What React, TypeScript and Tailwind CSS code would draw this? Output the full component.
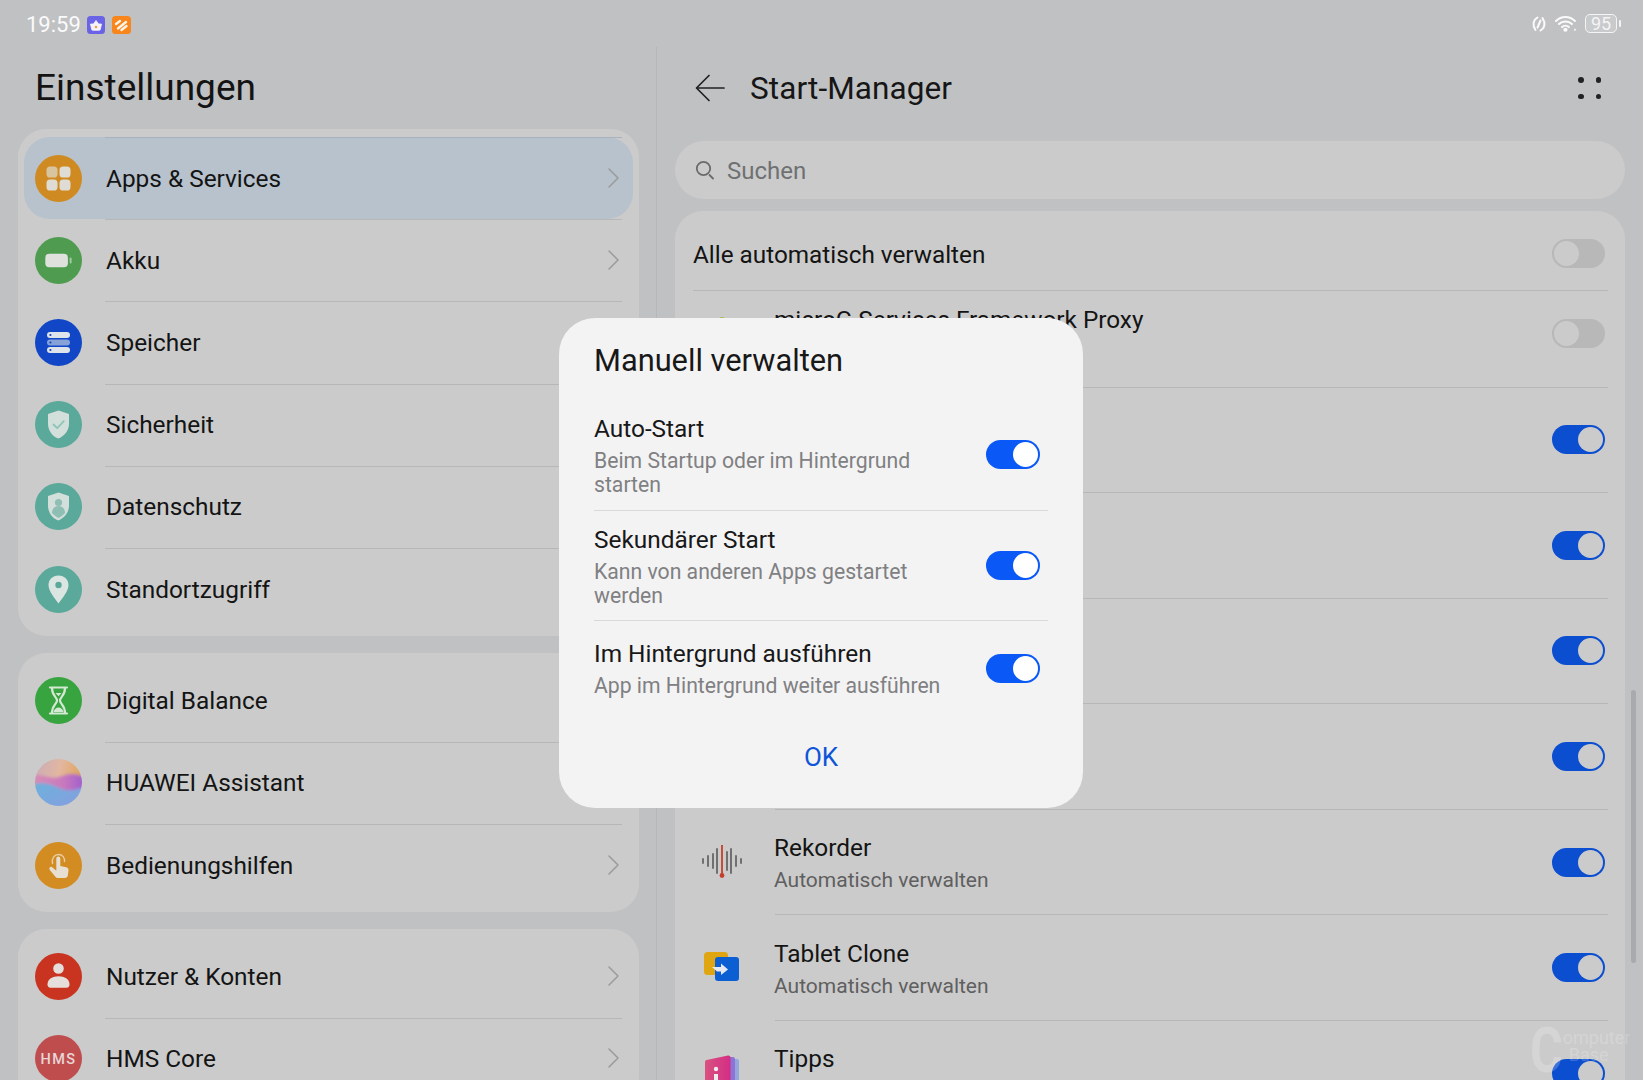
import type { ReactNode } from 'react'

function Circle({ fill, children }: { fill: string; children?: ReactNode }) {
  return (
    <svg viewBox="0 0 47 47" className="h-[47px] w-[47px] shrink-0">
      <circle cx="23.5" cy="23.5" r="23.5" fill={fill} />
      {children}
    </svg>
  )
}

const AppsIcon = () => (
  <Circle fill="#d08a22">
    <rect x="11.5" y="11.5" width="11" height="11" rx="3.6" fill="#d9c4a0" />
    <rect x="24.5" y="11.5" width="11" height="11" rx="3.6" fill="#dfdcd6" />
    <rect x="11.5" y="24.5" width="11" height="11" rx="3.6" fill="#dfdcd6" />
    <rect x="24.5" y="24.5" width="11" height="11" rx="3.6" fill="#dfdcd6" />
  </Circle>
)
const BatteryIcon = () => (
  <Circle fill="#4f9c50">
    <rect x="10.3" y="16.7" width="22.6" height="13.6" rx="4" fill="#dfe2dc" />
    <rect x="34.6" y="20.6" width="2" height="6" rx="1" fill="#a5c8a2" />
  </Circle>
)
const StorageIcon = () => (
  <Circle fill="#1147c6">
    <rect x="12" y="13" width="23" height="6" rx="3" fill="#dfe3ea" />
    <rect x="12" y="20.5" width="23" height="6" rx="3" fill="#86a2d9" />
    <rect x="12" y="28" width="23" height="6" rx="3" fill="#dfe3ea" />
    <circle cx="15.4" cy="16" r="1.1" fill="#1147c6" />
    <circle cx="15.4" cy="23.5" r="1.1" fill="#1147c6" />
    <circle cx="15.4" cy="31" r="1.1" fill="#1147c6" />
  </Circle>
)
const Shield = () => <path d="M23.5 9.5l10.5 3.6v9.6c0 6.8-4.6 12.1-10.5 14.8C17.6 35.8 13 29.5 13 22.7V13.1z" fill="#d3dfdb" />
const SecurityIcon = () => (
  <Circle fill="#5aa99a">
    <Shield />
    <path d="M18.5 23.5l3.7 3.7 6.6-7" fill="none" stroke="#8fc5b9" strokeWidth="1.8" strokeLinecap="round" strokeLinejoin="round" />
  </Circle>
)
const PrivacyIcon = () => (
  <Circle fill="#5aa99a">
    <Shield />
    <circle cx="23.5" cy="19.5" r="3.6" fill="#8fbfb4" />
    <path d="M17 30c0-4.5 2.9-7 6.5-7s6.5 2.5 6.5 7c-1.8 2.1-4 3.8-6.5 5-2.5-1.2-4.7-2.9-6.5-5z" fill="#8fbfb4" />
  </Circle>
)
const LocationIcon = () => (
  <Circle fill="#5aa99a">
    <path d="M23.5 9.5c6 0 10 4.3 10 9.6 0 6-5.8 12.8-10 18.4-4.2-5.6-10-12.4-10-18.4 0-5.3 4-9.6 10-9.6z" fill="#dbe6e3" />
    <circle cx="23.5" cy="19" r="3.2" fill="#5aa99a" />
  </Circle>
)
const BalanceIcon = () => (
  <Circle fill="#37a43f">
    <path d="M15 10.5h17M15 36.5h17M17 11c0 8 5 9 5 12.5S17 28 17 36M30 11c0 8-5 9-5 12.5S30 28 30 36" fill="none" stroke="#d5e8d4" strokeWidth="2.2" strokeLinecap="round" />
    <path d="M20.5 16h6l-3 3.2z" fill="#d5e8d4" />
    <path d="M18.5 35c.6-3 3-4.500 5-4.500s4.400 1.500 5 4.500z" fill="#d5e8d4" />
  </Circle>
)
const AssistantIcon = () => (
  <svg viewBox="0 0 47 47" className="h-[47px] w-[47px] shrink-0">
    <defs>
      <clipPath id="orb">
        <circle cx="23.5" cy="23.5" r="23.5" />
      </clipPath>
      <filter id="soft">
        <feGaussianBlur stdDeviation="1.6" />
      </filter>
      <linearGradient id="orbTop" x1="0" y1="0" x2="1" y2="0.3">
        <stop offset="0" stopColor="#c4a9bd" />
        <stop offset="0.55" stopColor="#e2b7a0" />
        <stop offset="1" stopColor="#dfa04f" />
      </linearGradient>
      <linearGradient id="orbMid" x1="0" y1="0" x2="1" y2="0">
        <stop offset="0" stopColor="#d890b4" />
        <stop offset="0.6" stopColor="#c878bd" />
        <stop offset="1" stopColor="#9a5ccf" />
      </linearGradient>
      <linearGradient id="orbBottom" x1="0" y1="0" x2="1" y2="1">
        <stop offset="0" stopColor="#6bb2dc" />
        <stop offset="1" stopColor="#8a9be0" />
      </linearGradient>
    </defs>
    <g clipPath="url(#orb)">
      <g filter="url(#soft)">
        <rect x="-4" y="-4" width="55" height="55" fill="url(#orbTop)" />
        <path d="M-4 17c8-4 19 4 28 1s15-5 27 1v32H-4z" fill="url(#orbMid)" />
        <path d="M-4 26c8-3 18-2 26 2s16 5 29-1v24H-4z" fill="url(#orbBottom)" />
      </g>
    </g>
  </svg>
)
const AccessIcon = () => (
  <Circle fill="#d38c22">
    <path d="M17.5 21.5c-1-5.5 2-9 6-9s6.500 3.200 6 7" fill="none" stroke="#e9cda0" strokeWidth="1.4" strokeLinecap="round" />
    <path d="M21.3 16.5c0-2.800 4-2.800 4 0v7.500l6 1.300c1.700.4 2.400 1.600 2.200 3.200l-.7 5c-.2 1.500-1.400 2.500-3 2.500h-6.600c-1.200 0-2.100-.4-2.800-1.300l-5.600-6.700c-1.500-1.900.9-4.200 2.700-2.600l3.800 3.300z" fill="#e6dfd2" />
  </Circle>
)
const UserIcon = () => (
  <Circle fill="#c8341f">
    <circle cx="23.5" cy="15.5" r="5.3" fill="#e5dedb" />
    <path d="M12.5 31.5c0-5.500 5-8.200 11-8.200s11 2.700 11 8.200c0 2-1 3.200-3 3.200h-16c-2 0-3-1.200-3-3.200z" fill="#e5dedb" />
  </Circle>
)
const HmsIcon = () => (
  <Circle fill="#bf4d4e">
    <text x="23.5" y="28.5" textAnchor="middle" fontFamily="Roboto, sans-serif" fontSize="14.5" fontWeight="500" letterSpacing="1.5" fill="#e8d6d6">
      HMS
    </text>
  </Circle>
)

const Chevron = () => (
  <svg viewBox="0 0 11 20" className="-mt-[2px] h-[20px] w-[11px] shrink-0">
    <path d="M1 1l9 9-9 9" fill="none" stroke="#9b9b9b" strokeWidth="1.5" strokeLinecap="round" strokeLinejoin="round" />
  </svg>
)

function SettingRow({ icon, label, first, selected }: { icon: ReactNode; label: string; first?: boolean; selected?: boolean }) {
  return (
    <div className={selected ? 'mx-[6px] flex h-[82.2px] items-center gap-[24px] rounded-[26px] bg-[#b7c2cd] pl-[11px] pr-[11px]' : 'mx-[6px] flex h-[82.2px] items-center gap-[24px] pl-[11px] pr-[11px]'}>
      {icon}
      <div className={first && !selected ? '-ml-[1px] flex h-full flex-1 items-center justify-between pl-[1px] pr-[3px]' : selected ? '-ml-[1px] flex h-full flex-1 items-center justify-between border-t border-[#a9b3bd] pl-[1px] pr-[3px]' : '-ml-[1px] flex h-full flex-1 items-center justify-between border-t border-[#b7b7b7] pl-[1px] pr-[3px]'}>
        <span className="text-[24.4px] leading-[32px] text-[#141414]">{label}</span>
        <Chevron />
      </div>
    </div>
  )
}

function Toggle({ on, bright, className }: { on: boolean; bright?: boolean; className?: string }) {
  if (!on) {
    return (
      <div className={`flex h-[29px] w-[53px] shrink-0 items-center justify-start rounded-full bg-[#b8b8b8] pl-[2px] ${className ?? ''}`}>
        <div className="h-[25px] w-[25px] rounded-full bg-[#cbcbcb]" />
      </div>
    )
  }
  return (
    <div className={bright ? 'flex h-[29px] w-[54px] shrink-0 items-center justify-end rounded-full bg-[#0a59f7] pr-[2px]' : 'flex h-[29px] w-[53px] shrink-0 items-center justify-end rounded-full bg-[#0b4ed0] pr-[2px]'}>
      <div className={bright ? 'h-[25px] w-[25px] rounded-full bg-white' : 'h-[25px] w-[25px] rounded-full bg-[#cbcbcb]'} />
    </div>
  )
}

const RecorderIcon = () => (
  <svg viewBox="0 0 40 34" className="h-[34px] w-[40px]">
    {[
      [1, 2],
      [6, 5],
      [11, 7],
      [15, 12],
      [25, 9],
      [29, 12],
      [34, 5],
      [39, 2],
    ].map(([x, h]) => (
      <line key={x} x1={x} x2={x} y1={16 - h} y2={16 + h} stroke="#666" strokeWidth="1.8" strokeLinecap="round" />
    ))}
    <line x1="20" x2="20" y1="0" y2="30" stroke="#c5402a" strokeWidth="1.8" />
    <circle cx="20" cy="30.5" r="2.4" fill="#c5402a" />
  </svg>
)
const CloneIcon = () => (
  <svg viewBox="0 0 36 30" className="h-[30px] w-[36px]">
    <rect x="0" y="0" width="24" height="23" rx="3.5" fill="#dfa611" />
    <rect x="11" y="5" width="24" height="24" rx="3" fill="#0b5fd3" />
    <path d="M8 15h9v-3.500l7 6-7 5.500v-3.500h-4z" fill="#e6eaf0" />
  </svg>
)
const TipsIcon = () => (
  <svg viewBox="0 0 36 36" className="h-[36px] w-[36px]">
    <defs>
      <linearGradient id="tips" x1="0" y1="0" x2="1" y2="0">
        <stop offset="0" stopColor="#d9527f" />
        <stop offset="1" stopColor="#d42d86" />
      </linearGradient>
    </defs>
    <rect x="27" y="4" width="8" height="32" rx="2" fill="#93a7dc" />
    <rect x="22" y="2" width="9" height="34" rx="2" fill="#8e72d6" />
    <path d="M1 7c0-1 .6-1.800 1.600-2L24 .5c1.300-.3 2.500.7 2.500 2V36H1z" fill="url(#tips)" />
    <circle cx="12" cy="14" r="2.2" fill="#eee" />
    <rect x="10" y="19" width="4" height="17" fill="#eee" />
  </svg>
)

function AppRow({ name, icon }: { name?: string; icon?: ReactNode }) {
  return (
    <div className="flex h-[105.6px] items-stretch">
      <div className="flex w-[82px] shrink-0 items-center justify-center pr-[24px]">{icon}</div>
      <div className="flex flex-1 items-center justify-between border-t border-[#b7b7b7] pr-[3px]">
        <div className={name ? '-ml-[1px] flex flex-col pt-[4px]' : 'hidden'}>
          <span className="text-[24.4px] leading-[32px] text-[#141414]">{name}</span>
          <span className="text-[21px] leading-[32px] text-[#5f5f5f]">Automatisch verwalten</span>
        </div>
        <span />
        <Toggle on />
      </div>
    </div>
  )
}

function DialogOption({ title, lines, divider, className }: { title: string; lines: string[]; divider?: boolean; className: string }) {
  return (
    <div className={divider ? `flex items-center justify-between border-b border-[#d9d9da] pr-[8px] ${className}` : `flex items-center justify-between pr-[8px] ${className}`}>
      <div className="flex flex-col">
        <span className="pb-[5px] text-[24.4px] leading-[31px] text-[#181818]">{title}</span>
        {lines.map((line) => (
          <span key={line} className="text-[21.2px] leading-[24px] text-[#808082]">
            {line}
          </span>
        ))}
      </div>
      <Toggle on bright />
    </div>
  )
}

export default function App() {
  return (
    <div className="relative flex h-[1080px] w-[1643px] flex-col overflow-hidden bg-[#c0c1c3] [font-family:Roboto,sans-serif]">
      {/* status bar */}
      <div className="flex h-[47px] shrink-0 items-start justify-between pl-[26px] pr-[22px] pt-[14px]">
        <div className="flex items-center">
          <span className="mt-[1px] text-[22px] leading-[20px] text-[#fafafa]">19:59</span>
          <svg viewBox="0 0 18 18" className="ml-[6px] h-[18px] w-[18px]">
            <rect width="18" height="18" rx="3.5" fill="#6a63e6" />
            <path d="M3.5 8h11l-1.200 5.500a1 1 0 0 1-1 .8H5.700a1 1 0 0 1-1-.8zM6.500 8L9 4.500 11.500 8" fill="#f4f2fb" stroke="#f4f2fb" strokeWidth="0.8" />
            <circle cx="9" cy="11" r="1.3" fill="#f0a040" />
          </svg>
          <svg viewBox="0 0 19 18" className="ml-[7px] h-[18px] w-[19px]">
            <rect width="19" height="18" rx="3.5" fill="#f8861d" />
            <path d="M4 8l4-3M6 12.500l8-6.500M9.500 14l5-4" fill="none" stroke="#fdf3e6" strokeWidth="2.4" strokeLinecap="round" />
          </svg>
        </div>
        <div className="flex items-center">
          <svg viewBox="0 0 14 16" className="h-[16px] w-[14px]">
            <path d="M5.500 1.500C1 4 .3 9 3.500 14M8.500 14.500C13 12 13.700 7 10.500 2M8.500 4.500l-3 7" fill="none" stroke="#fafafa" strokeWidth="2" strokeLinecap="round" />
          </svg>
          <svg viewBox="0 0 22 16" className="ml-[9px] h-[17px] w-[23px]">
            <path d="M1 5.500c5-5 13-5 18 0M3.800 8.500c3.300-3.300 9.100-3.300 12.400 0M6.800 11.400c1.800-1.700 4.600-1.700 6.400 0" fill="none" stroke="#fafafa" strokeWidth="2" strokeLinecap="round" />
            <circle cx="10" cy="14" r="2" fill="#fafafa" />
            <path d="M18.500 12.500l2 1.500-2 1.500z" fill="#fafafa" />
          </svg>
          <div className="ml-[7px] flex h-[19px] w-[32px] items-center justify-center rounded-[5px] border border-[#f4f4f5] bg-[#c9cacc] text-[18px] leading-none text-[#f4f4f5]">
            95
          </div>
          <div className="ml-[2px] h-[7px] w-[2px] rounded-full bg-[#f4f4f5]" />
        </div>
      </div>

      <div className="flex min-h-0 flex-1">
        {/* settings column */}
        <div className="w-[656px] shrink-0 pl-[18px] pr-[17px]">
          <div className="flex h-[82px] items-center pb-[2px] pl-[17px]">
            <h1 className="text-[37px] font-normal leading-none text-[#141414]">Einstellungen</h1>
          </div>
          <div className="flex flex-col gap-[17px]">
            <div className="rounded-[28px] bg-[#cbcbcb] pb-[6px] pt-[8px]">
              <SettingRow icon={<AppsIcon />} label="Apps & Services" selected />
              <SettingRow icon={<BatteryIcon />} label="Akku" />
              <SettingRow icon={<StorageIcon />} label="Speicher" />
              <SettingRow icon={<SecurityIcon />} label="Sicherheit" />
              <SettingRow icon={<PrivacyIcon />} label="Datenschutz" />
              <SettingRow icon={<LocationIcon />} label="Standortzugriff" />
            </div>
            <div className="rounded-[28px] bg-[#cbcbcb] pb-[6px] pt-[6.5px]">
              <SettingRow icon={<BalanceIcon />} label="Digital Balance" first />
              <SettingRow icon={<AssistantIcon />} label="HUAWEI Assistant" />
              <SettingRow icon={<AccessIcon />} label="Bedienungshilfen" />
            </div>
            <div className="rounded-[28px] bg-[#cbcbcb] pb-[5px] pt-[6.5px]">
              <SettingRow icon={<UserIcon />} label="Nutzer & Konten" first />
              <SettingRow icon={<HmsIcon />} label="HMS Core" />
            </div>
          </div>
        </div>

        <div className="w-px shrink-0 bg-[#b6b7b9]" />

        {/* start manager column */}
        <div className="min-w-0 flex-1 px-[18px]">
          <div className="flex h-[82px] items-center justify-between pl-[20px] pr-[24px]">
            <div className="flex items-center gap-[25px]">
              <svg viewBox="0 0 30 28" className="h-[28px] w-[30px]">
                <path d="M29 14H2M14 1.500L1.500 14 14 26.500" fill="none" stroke="#222" strokeWidth="1.7" strokeLinecap="round" strokeLinejoin="round" />
              </svg>
              <h2 className="pt-[2px] text-[31.5px] font-normal leading-none tracking-[0.1px] text-[#161616]">Start-Manager</h2>
            </div>
            <div className="grid grid-cols-2 gap-x-[12px] gap-y-[11px]">
              <span className="h-[5.5px] w-[5.5px] rounded-full bg-[#222]" />
              <span className="h-[5.5px] w-[5.5px] rounded-full bg-[#222]" />
              <span className="h-[5.5px] w-[5.5px] rounded-full bg-[#222]" />
              <span className="h-[5.5px] w-[5.5px] rounded-full bg-[#222]" />
            </div>
          </div>
          <div className="mt-[12px] flex h-[58px] items-center gap-[12px] rounded-full bg-[#cbcbcb] pl-[20px]">
            <svg viewBox="0 0 20 20" className="h-[20px] w-[20px]">
              <circle cx="8.5" cy="8.5" r="6.7" fill="none" stroke="#6a6b6d" strokeWidth="1.8" />
              <path d="M14.500 15l3.500 3.500" fill="none" stroke="#6a6b6d" strokeWidth="1.8" strokeLinecap="round" />
            </svg>
            <span className="pt-[2px] text-[24px] leading-none text-[#6f7072]">Suchen</span>
          </div>
          <div className="mt-[12px] rounded-t-[28px] bg-[#cbcbcb] pl-[18px] pr-[17px]">
            <div className="flex h-[80px] items-center justify-between border-b border-[#b7b7b7] pr-[3px]">
              <span className="mt-[8px] text-[24.3px] leading-[32px] text-[#141414]">Alle automatisch verwalten</span>
              <Toggle on={false} className="mt-[5px]" />
            </div>
            <div className="flex h-[95.5px] items-stretch">
              <div className="w-[82px] shrink-0 pr-[16px] pt-[26px]">
                <div className="ml-[26px] h-[6px] w-[6px] rounded-full bg-[#a9b83a]" />
              </div>
              <div className="-ml-[1px] flex flex-1 justify-between pr-[3px] pt-[13px]">
                <span className="text-[24.3px] leading-[32px] text-[#141414]">microG Services Framework Proxy</span>
                <Toggle on={false} className="mt-[15px]" />
              </div>
            </div>
            <AppRow />
            <AppRow />
            <AppRow />
            <AppRow />
            <AppRow name="Rekorder" icon={<RecorderIcon />} />
            <AppRow name="Tablet Clone" icon={<CloneIcon />} />
            <AppRow name="Tipps" icon={<TipsIcon />} />
          </div>
        </div>
      </div>

      {/* scrollbar */}
      <div className="absolute left-[1631px] top-[690px] h-[273px] w-[5px] rounded-full bg-[#a9aaac]" />

      {/* watermark */}
      <div className="pointer-events-none absolute left-[1530px] top-[1022px] flex text-white/20">
        <span className="origin-top scale-y-125 text-[50px] font-bold leading-[46px]">C</span>
        <div className="flex flex-col pt-[7px] text-[18px] leading-[17px]">
          <span>omputer</span>
          <span className="pl-[6px]">Base</span>
        </div>
      </div>

      {/* dialog */}
      <div className="absolute left-[559px] top-[318px] flex h-[490px] w-[524px] flex-col rounded-[36px] bg-[#f3f3f4] pl-[35px] pr-[35px]">
        <h3 className="pt-[25px] text-[30.8px] font-normal leading-[36px] text-[#181818]">Manuell verwalten</h3>
        <DialogOption className="mt-[20px] h-[112px]" title="Auto-Start" lines={['Beim Startup oder im Hintergrund', 'starten']} divider />
        <DialogOption className="h-[110px]" title="Sekundärer Start" lines={['Kann von anderen Apps gestartet', 'werden']} divider />
        <DialogOption className="h-[94px]" title="Im Hintergrund ausführen" lines={['App im Hintergrund weiter ausführen']} />
        <div className="mt-[27px] text-center text-[26px] font-normal leading-[30px] text-[#0f55d8]">OK</div>
      </div>
    </div>
  )
}
